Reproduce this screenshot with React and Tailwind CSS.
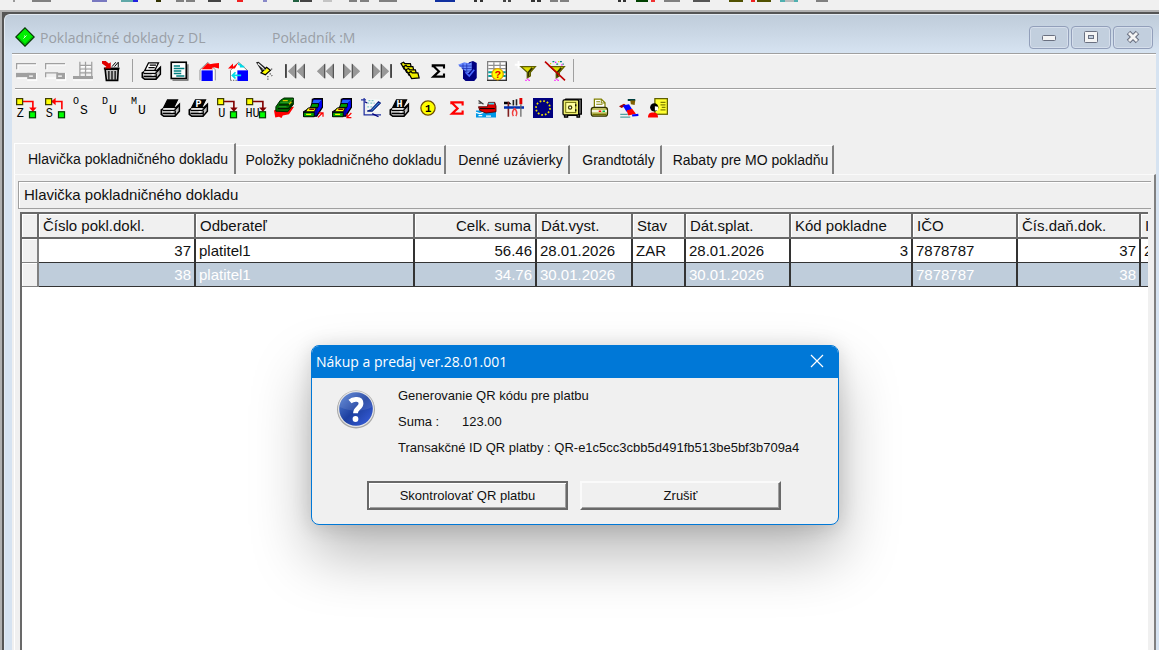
import React, { useState } from 'react';
import clsx from 'clsx';

// small 16x16 pixel icons, shown at 20px
function Pic({ children }) {
  return (
    <svg viewBox="0 0 16 16" className="w-5 h-5 block overflow-visible" fill="none" aria-hidden="true">
      {children}
    </svg>
  );
}

function Letter({ x, y, size = 9, fill = '#000', bold, children }) {
  return (
    <text x={x} y={y} fontSize={size} fill={fill} fontWeight={bold ? 700 : 400} fontFamily="'Liberation Mono', monospace">
      {children}
    </text>
  );
}

function Printer({ paper = '#fff', letter, lines }) {
  return (
    <Pic>
      <path d="M1 9.500L4 7.500h9l2.500-2.500v5.500L12 14.500H3L1 13z" fill="#c0c0c0" stroke="#000" strokeWidth="1.200" />
      <path d="M2 9.800h9.500L15 6.500" stroke="#000" />
      <path d="M2.500 8.700h9" stroke="#fff" />
      <path d="M2 12.300h10M12.200 10v4.500" stroke="#000" />
      <path d="M3 13.800h8" stroke="#555" />
      <path d="M8.500 11h2" stroke="#fff" />
      <path d="M6 1.500h8L11 7.500H3z" fill={paper} stroke="#000" />
      {lines && <path d="M7 3.300h5M6 5.300h5" stroke="#000" />}
      {letter && <Letter x={6} y={7} size={8} bold fill="#fff">{letter}</Letter>}
    </Pic>
  );
}

function Transfer({ label, line = '#f00', back }) {
  return (
    <Pic>
      <path d="M5 2.800h8.500V9" stroke={line} strokeWidth="1.300" />
      {back ? <path d="M5 2.800l3.500-3v6z" fill={line} /> : <path d="M13.500 11L10.500 7.500h6z" fill={line} />}
      <rect x=".5" y=".5" width="4.800" height="4.800" fill="#ff0" stroke="#404000" />
      <rect x="10.800" y="11" width="4.800" height="4.800" fill="#0f0" stroke="#004000" />
      <Letter x={label.length > 1 ? -0.5 : label === 'U' ? 1 : 0.5} y={15.3} size={9.5}>{label}</Letter>
    </Pic>
  );
}

function Pair({ a, b }) {
  return (
    <Pic>
      <Letter x={0} y={5} size={8}>{a}</Letter>
      <Letter x={5.5} y={13} size={10.5}>{b}</Letter>
    </Pic>
  );
}

function Cabinet({ out }) {
  return (
    <Pic>
      <path d="M7.500 1L9 .5h6.500v7L11 14.500H.5V11L7 7z" fill="#0000a8" stroke="#000" />
      <path d="M8.500 1.500H15l-2.500 2.500h-5z" fill="#2060ff" />
      <path d="M12.500 4L15 2v5l-3.500 5z" fill="#00f" />
      <path d="M7 4.500h5.500l-.5 3H6z" fill="#00a000" stroke="#000" strokeWidth=".7" />
      <path d="M4 8h6.500l-1.500 3H2z" fill="#ff0" stroke="#000" strokeWidth=".7" />
      <path d="M5 9h4" stroke="#800000" />
      <path d="M.5 11.500h8.500v3.500H.5z" fill="#00a000" stroke="#000" strokeWidth=".7" />
      <path d="M2.500 13h4" stroke="#ff0" />
      <path d={out ? 'M12 15.500l3.500-3.500M12.500 11.800H16V15' : 'M15.500 12L12 15.500M12 12.500v3.200h3.500'} stroke="#f00" />
    </Pic>
  );
}

function Disabled({ filled }) {
  return (
    <Pic>
      <path d="M1.500 7V3h15" stroke="#fff" />
      <path d="M.5 6.500V2h15.500" stroke="#a0a0a0" />
      {filled ? <rect x="0" y="9.500" width="11" height="3.500" fill="#a0a0a0" /> : <path d="M.5 13V9.500h10" stroke="#a0a0a0" />}
      <path d="M1 13.700h8" stroke="#fff" />
      <rect x="9" y="9.500" width="7" height="5" fill="#a0a0a0" />
      <path d="M10.500 12h3" stroke="#fff" />
      <path d="M9 15.200h7.500V9.500" stroke="#fff" />
    </Pic>
  );
}

function Funnel({ crossed }) {
  return (
    <Pic>
      {crossed ? (
        <>
          <path d="M6 .5h1.500M9 2.500h1.500M12 .5h1.500M14 2.500h1" stroke="#008080" />
          <path d="M8 1h1M13 3h1" stroke="#f0f" />
          <path d="M10.500 .5h1M4 2h1" stroke="#dd0" />
        </>
      ) : (
        <path d="M2 0v6M-1 3h6" stroke="#fff" strokeWidth="1.500" />
      )}
      <path d="M4 4.500h11.500l-4 4.500v3l-2.500 1.500V9z" fill="#dd0" stroke="#606000" />
      <path d="M13 5.500L10 9v3.500" stroke="#303000" strokeWidth="1.500" />
      <path d="M7.500 15.500h1M10 15.500h1M9 14.500h1" stroke="#f0f" />
      {crossed && <path d="M0 .5l16 15" stroke="#c00000" strokeWidth="1.300" />}
    </Pic>
  );
}

function House({ blue }) {
  return (
    <Pic>
      {blue ? (
        <>
          <path d="M2 15.500V7.500L8.500 1 15.500 7.500" fill="#fff" stroke="#808080" strokeWidth=".8" />
          <path d="M2 15.500h5" stroke="#808080" strokeDasharray="1 1" />
          <rect x="7.500" y="7.500" width="8.500" height="8.500" fill="#00f" />
          <path d="M0 6l4-4v2.500L8 1.500 5.500 6z" fill="#f00" />
          <path d="M8 2.500c2 0 3 1 3.500 2.500M9.500 4.500h3.500M10.500 11.500H4M6 9l-2.500 2.500L6 14" stroke="#00dce8" strokeWidth="1.400" />
        </>
      ) : (
        <>
          <path d="M.8 15.500V7L7 1l6 6v8.500" fill="#fff" stroke="#909090" strokeWidth=".8" />
          <rect x="2" y="7.500" width="9" height="8.500" fill="#00f" />
          <path d="M2 6.500L7 1.500l1.500 1L12 2l4-.5v4.500l-4-1-2 .5 1.500 1z" fill="#f00" />
        </>
      )}
    </Pic>
  );
}

function Nav({ bar, flip }) {
  return (
    <Pic>
      <g transform={flip ? 'matrix(-1 0 0 1 16 0)' : undefined}>
        {bar && <rect x="0" y="2.500" width="1.500" height="11" fill="#444" />}
        <path d="M8.500 3v10.500L3 8.200zM15.500 3v10.500L10 8.200z" fill="#989898" stroke="#989898" />
        <path d="M8.500 2.500v11M15.500 2.500v11" stroke="#555" />
      </g>
    </Pic>
  );
}

const recordTools = [
  { title: 'Nový', icon: <Disabled filled /> },
  { title: 'Oprava', icon: <Disabled /> },
  {
    title: 'Tabuľka',
    icon: (
      <Pic>
        <path d="M5.500 12V.5M15 .5v13M5.500 3.500h9.500M5.500 6.500h9.500M5.500 9.500h9.500M10 .5v12" stroke="#a0a0a0" />
        <path d="M0 12h16v2.500H0z" fill="#a0a0a0" />
        <path d="M0 15h16" stroke="#fff" />
        <path d="M6.500 4.500h3M11 4.500h3M6.500 7.500h3M11 7.500h3" stroke="#fff" />
      </Pic>
    ),
  },
  {
    title: 'Zrušiť',
    icon: (
      <Pic>
        <path d="M2.500 6.500h10.500l-.5 9h-9z" fill="#c0c0c0" stroke="#000" strokeWidth="1.300" />
        <path d="M5.500 8v7M8 8v7M10.500 8v7" stroke="#000" />
        <path d="M1.500 6h12.500" stroke="#000" strokeWidth="1.500" />
        <path d="M8 4.500L11 1M10 4.500l3-3.500v4" stroke="#000" strokeWidth=".8" />
        <path d="M0 0h3l2.500 2L7 1v5H2l1.500-1.500L0 2z" fill="#e00000" />
      </Pic>
    ),
  },
];

const mainTools = [
  { title: 'Tlač', icon: <Printer lines /> },
  {
    title: 'Zoznam',
    icon: (
      <Pic>
        <rect x="1" y="1" width="12" height="13" fill="#fff" stroke="#000" strokeWidth="1.300" />
        <path d="M3 4h5M3 6h8.500M3 8h6M3 10h6M5 12h6.500" stroke="#008080" strokeWidth="1.100" />
        <path d="M14.300 2.500v12.800H2" stroke="#606060" />
      </Pic>
    ),
  },
  { title: 'Domov', icon: <House /> },
  { title: 'Prenos', icon: <House blue /> },
  {
    title: 'Hľadať',
    icon: (
      <Pic>
        <path d="M0 1l2-.5 6 5-3 3.500z" fill="#222" />
        <path d="M1.500 2l5 4.500" stroke="#fff" />
        <path d="M4 9.500l4.500-4.500 3 2.500L7.500 11z" fill="#ff0" stroke="#000" />
        <path d="M5 6.500l3 .5" stroke="#888" />
        <path d="M11 10l2 2M9.500 12v3M12 6.500h2" stroke="#555" strokeDasharray="1 1" />
      </Pic>
    ),
  },
  { title: 'Prvý', icon: <Nav bar /> },
  { title: 'Predchádzajúci', icon: <Nav /> },
  { title: 'Ďalší', icon: <Nav flip /> },
  { title: 'Posledný', icon: <Nav bar flip /> },
  {
    title: 'Zložky',
    icon: (
      <Pic>
        <path d="M0 2l2-1 1 1h4.500l1 4-6 .5z" fill="#ee0" stroke="#000" />
        <path d="M2 4.500l2-1 1 1h4.500l1 4-6 .5z" fill="#ee0" stroke="#000" />
        <path d="M4 7l2-1 1 1h4.500l1 4-6 .5z" fill="#ee0" stroke="#000" />
        <path d="M6 9.500l2-1 1 1h4.500l1 4-6 .5z" fill="#ee0" stroke="#000" />
      </Pic>
    ),
  },
  {
    title: 'Súčet',
    icon: <Pic><path d="M3 5V3.500h9v2.500M3.500 4l4.500 4.300-4.500 4.200h8.500V10" stroke="#000" strokeWidth="1.700" /></Pic>,
  },
  {
    title: 'Kôš',
    icon: (
      <Pic>
        <path d="M9 1l3-1 3 1.500v12L13 16H6l-2-2V6z" fill="#000080" />
        <path d="M0 3l5-2 4 1 2-1v6l-3 3z" fill="#6a8cff" />
        <path d="M1 4h10M3 6h8M5 8h6M4 2v5M7 2v7" stroke="#1e30b0" strokeWidth=".6" />
        <path d="M6 9l3 3 4-5" stroke="#4868ff" strokeWidth="1.300" />
      </Pic>
    ),
  },
  {
    title: 'Dotaz',
    icon: (
      <Pic>
        <rect x=".5" y=".5" width="15" height="15" fill="#fff" stroke="#808080" />
        <path d="M1 3.500h14M1 6h14M5.500 1v14M10.500 1v14" stroke="#909090" />
        <path d="M1 9h4M1 12h4M12 9h3M12 12h3" stroke="#00a0a0" strokeWidth="1.500" />
        <path d="M15.500 1v14.500H0" stroke="#333" />
        <circle cx="8.500" cy="10.500" r="4.500" fill="#ff0" stroke="#e0a000" />
        <Letter x={6.100} y={13.500} size={8.500} fill="#e00000" bold>?</Letter>
      </Pic>
    ),
  },
  { title: 'Filter', icon: <Funnel /> },
  { title: 'Zrušiť filter', icon: <Funnel crossed /> },
];

const docTools = [
  { title: 'Prevod Z', icon: <Transfer label="Z" /> },
  { title: 'Prevod S', icon: <Transfer label="S" back /> },
  { title: 'OS', icon: <Pair a="O" b="S" /> },
  { title: 'DU', icon: <Pair a="D" b="U" /> },
  { title: 'MU', icon: <Pair a="M" b="U" /> },
  { title: 'Tlačiareň', icon: <Printer paper="#000" /> },
  { title: 'Tlač P', icon: <Printer paper="#000" letter="P" /> },
  { title: 'Uzávierka', icon: <Transfer label="U" line="#800000" /> },
  { title: 'Hlavná uzávierka', icon: <Transfer label="HU" line="#800000" /> },
  {
    title: 'Peniaze',
    icon: (
      <Pic>
        <path d="M0 10l4-2 12-1-4 6-5 1-1 2-2-1-3 .5z" fill="#f00" />
        <path d="M5 2l3-2h7.500v5L11 11l-9.500-.5V7z" fill="#007000" stroke="#002800" strokeWidth=".8" />
        <path d="M4 5.500h8l3-3.500M3 8.500h8.500L15 4.500" stroke="#001800" />
        <path d="M5 3.500h7L15 1M4 7h6" stroke="#30a030" strokeWidth=".7" />
        <path d="M7 2h4M12 5l2-2" stroke="#dcc800" />
      </Pic>
    ),
  },
  { title: 'Výdaj', icon: <Cabinet out /> },
  { title: 'Príjem', icon: <Cabinet /> },
  {
    title: 'Graf',
    icon: (
      <Pic>
        <path d="M0 1.500h4M2.500 0v13.500H16" stroke="#2030a0" />
        <path d="M5 1h10v10H5z" fill="#f4f8f8" />
        <path d="M5 4h6M5 7h4M6 2h5" stroke="#80c8c8" strokeDasharray="1.500 1" />
        <path d="M5 10.500l3-1 6-6.500 1.500 1-6.500 6.500z" fill="#30a0e0" stroke="#102080" strokeWidth=".9" />
        <path d="M3 3l2 1M9 12.500l5 2.500" stroke="#000080" />
      </Pic>
    ),
  },
  { title: 'Tlač H', icon: <Printer paper="#000" letter="H" /> },
  {
    title: 'Jedna',
    icon: (
      <Pic>
        <circle cx="8" cy="8" r="5.700" fill="#ff0" stroke="#705000" />
        <Letter x={5.600} y={10.800} size={8.500} bold>1</Letter>
      </Pic>
    ),
  },
  {
    title: 'Súčty',
    icon: <Pic><path d="M3.500 5V3.500h9v2.500M4 4l4.500 4.300-4.500 4.200h8.500V10" stroke="#f00" strokeWidth="1.700" /></Pic>,
  },
  {
    title: 'Doprava',
    icon: (
      <Pic>
        <path d="M0 10h16v5.500H0z" fill="#0098e8" />
        <path d="M0 11.500l3 1 3-1M2 14h3M8 14.500h4" stroke="#fff" />
        <path d="M2 7h7l1-3.500h5l1 3v4.500l-8 1-5-2z" fill="#e00000" stroke="#500000" strokeWidth=".7" />
        <path d="M10 4.500h4.500" stroke="#40d8e8" strokeWidth="1.500" />
        <path d="M2 2l4 3M2 4h3" stroke="#404040" />
        <path d="M3 8.500h12" stroke="#000" strokeWidth=".8" />
      </Pic>
    ),
  },
  {
    title: 'Nástroje',
    icon: (
      <Pic>
        <path d="M0 3h4l2 2H0z" fill="#000" />
        <path d="M3.500 3v12" stroke="#802020" strokeWidth="1.300" />
        <path d="M7.500 1.500V6M10 1v5" stroke="#222" strokeWidth="1.300" />
        <path d="M0 7.500h16" stroke="#0030b0" strokeWidth="2" />
        <path d="M13.500 0v5" stroke="#e00000" strokeWidth="2.300" />
        <path d="M13.500 5v10" stroke="#666" />
        <path d="M7.500 14.500C6 12 7 10 8.500 8.500 10 10 11 12 9.500 14.500" stroke="#f04040" strokeWidth="1.200" />
      </Pic>
    ),
  },
  {
    title: 'EÚ',
    icon: (
      <Pic>
        <rect width="16" height="16" fill="#000080" />
        <circle cx="8" cy="8" r="5.600" stroke="#e8e000" strokeWidth="1.400" strokeDasharray="1.400 1.532" />
      </Pic>
    ),
  },
  {
    title: 'Trezor',
    icon: (
      <Pic>
        <path d="M3 .8h12.500v12H14v2.500h-2v-1.500H4.500v1.500H2V3z" fill="#707070" stroke="#000" />
        <rect x=".8" y="1.500" width="12.500" height="12" rx="1" fill="#f0f070" stroke="#000" />
        <rect x="3" y="3.500" width="8" height="8" fill="#ffffa0" stroke="#606000" strokeWidth=".7" />
        <circle cx="6.500" cy="7.500" r="1.300" fill="#fff" stroke="#404000" />
        <path d="M11 5v1.500M11 9v1.500" stroke="#000" />
      </Pic>
    ),
  },
  {
    title: 'Fiškálna tlačiareň',
    icon: (
      <Pic>
        <path d="M3.500 7.500V.8H9l3 3v3.700" fill="#fff" stroke="#808000" />
        <path d="M5 3h3M5 5h5M9 1v3h3" stroke="#808000" strokeWidth=".8" />
        <rect x="1" y="7.500" width="13" height="7" rx="2" fill="#c0c060" stroke="#303000" />
        <path d="M1.500 10.500h12" stroke="#f4f4e0" strokeWidth="1.800" />
        <path d="M7 10.500h2" stroke="#f00" strokeWidth="1.200" />
        <path d="M10 10.500h2" stroke="#00c040" strokeWidth="1.200" />
        <path d="M2 13h11" stroke="#707000" />
      </Pic>
    ),
  },
  {
    title: 'Rýchlo',
    icon: (
      <Pic>
        <path d="M7 1.500h6" stroke="#004040" strokeWidth="1.600" />
        <path d="M9 2h4l-.5 3.500L9.500 5z" fill="#806000" />
        <path d="M0 6.500l4-2 2 1.500-4 2z" fill="#a00000" />
        <path d="M3 6l5-1 2.500 4L6 11z" fill="#00f" />
        <path d="M6 10l4.500-1.500 3 4-6 1.500z" fill="#f00" />
        <path d="M10.500 14l5-.5" stroke="#00f" strokeWidth="1.800" />
        <path d="M1 13h6M1 15.300h8" stroke="#50a0a0" />
      </Pic>
    ),
  },
  {
    title: 'Zákazník',
    icon: (
      <Pic>
        <rect x="5.500" y=".5" width="10" height="12.500" fill="#ffff30" stroke="#606000" />
        <path d="M10 3.500h4M10 5.500h4M11 7.500h3M10 9.500h4" stroke="#808000" />
        <circle cx="5" cy="7.500" r="3.300" fill="#000" />
        <path d="M5.500 6.500L8 7v3H5.500z" fill="#fff" />
        <path d="M0 15.500c0-3 1.500-4 4-4s4 1 4 4z" fill="#f00" />
      </Pic>
    ),
  },
];

const columns = [
  { key: 'cislo', label: 'Číslo pokl.dokl.', width: 157, num: true },
  { key: 'odberatel', label: 'Odberateľ', width: 219 },
  { key: 'suma', label: 'Celk. suma', width: 122, num: true, headRight: true },
  { key: 'vyst', label: 'Dát.vyst.', width: 96 },
  { key: 'stav', label: 'Stav', width: 53 },
  { key: 'splat', label: 'Dát.splat.', width: 105 },
  { key: 'kod', label: 'Kód pokladne', width: 122, num: true },
  { key: 'ico', label: 'IČO', width: 105 },
  { key: 'danDok', label: 'Čís.daň.dok.', width: 123, num: true },
  { key: 'ine', label: 'I', width: 90 },
];

const rows = [
  { cislo: '37', odberatel: 'platitel1', suma: '56.46', vyst: '28.01.2026', stav: 'ZAR', splat: '28.01.2026', kod: '3', ico: '7878787', danDok: '37', ine: '2' },
  { cislo: '38', odberatel: 'platitel1', suma: '34.76', vyst: '30.01.2026', stav: '', splat: '30.01.2026', kod: '', ico: '7878787', danDok: '38', ine: '' },
];

const tabs = [
  { label: 'Hlavička pokladničného dokladu', width: 'w-[222px]' },
  { label: 'Položky pokladničného dokladu', width: 'w-[210px]' },
  { label: 'Denné uzávierky', width: 'w-[124px]' },
  { label: 'Grandtotály', width: 'w-[92px]' },
  { label: 'Rabaty pre MO pokladňu', width: 'w-[172px]' },
];

// lower edges of the main application toolbar: x, width, colour
const appTools = [
  [13, 2, '#999'], [32, 19, '#808080'], [92, 15, '#7878c0'], [121, 12, '#60a8a8'], [133, 5, '#2020e0'],
  [156, 5, '#303000'], [176, 8, '#808080'], [186, 9, '#808080'], [208, 13, '#444'], [237, 6, '#f02020'],
  [263, 4, '#8888c8'], [293, 6, '#206040'], [300, 12, '#444'], [323, 9, '#c4c4c4'], [349, 8, '#808080'],
  [360, 9, '#808080'], [379, 18, '#808080'], [435, 20, '#1030a0'], [474, 3, '#333'], [480, 3, '#333'],
  [503, 3, '#444'], [508, 3, '#444'], [531, 4, '#333'], [537, 4, '#333'], [550, 8, '#808080'],
  [560, 9, '#808080'], [618, 3, '#333'], [623, 3, '#333'], [636, 12, '#004000'], [651, 4, '#f03030'],
  [664, 16, '#808080'], [693, 17, '#555'], [729, 14, '#505000'], [751, 4, '#f02020'], [757, 14, '#505000'],
  [780, 5, '#50b0b0'], [785, 9, '#bbb'], [794, 4, '#50b0b0'], [816, 12, '#808080'],
];

function ToolGroup({ tools, className }) {
  return (
    <div className={clsx('flex items-center justify-between shrink-0', className)}>
      {tools.map((t) => (
        <button key={t.title} type="button" title={t.title} aria-label={t.title} className="shrink-0">
          {t.icon}
        </button>
      ))}
    </div>
  );
}

function CaptionButton({ label, children }) {
  return (
    <button
      type="button"
      aria-label={label}
      className="w-10 h-[23px] flex items-center justify-center rounded-sm border border-[#929fba] bg-[#c2cfde] shadow-[inset_0_0_0_1px_#d5deeb]"
    >
      <svg viewBox="0 0 16 14" className="w-4 h-3.5" fill="none" aria-hidden="true">{children}</svg>
    </button>
  );
}

function TitleBar() {
  return (
    <header className="h-[38px] shrink-0 flex items-center pt-[6px] pl-[10px] bg-linear-to-b from-[#bfccda] to-[#d6e3f1]">
      <svg viewBox="0 0 20 20" className="w-5 h-5 shrink-0" aria-hidden="true">
        <path d="M10 .8L19.200 10 10 19.200.8 10z" fill="#00f000" stroke="#063806" strokeWidth="1.200" />
        <path d="M2.500 10L10 17.500 17.500 10" fill="none" stroke="#009000" />
        <path d="M8.500 11.500l3-3M9 9h1" stroke="#d0ffd0" />
      </svg>
      <h1 className="ml-[5px] w-[232px] shrink-0 font-['Open_Sans',sans-serif] text-[14px] text-[#9a9fa6] whitespace-nowrap">
        Pokladničné doklady z DL
      </h1>
      <span className="grow font-['Open_Sans',sans-serif] text-[14px] text-[#9a9fa6]">Pokladník :M</span>
      <div className="flex gap-[2px] pr-[6px]">
        <CaptionButton label="Minimalizovať">
          <rect x="1.500" y="5.500" width="13" height="5" rx="1" fill="#f4f4f4" stroke="#6a7080" />
        </CaptionButton>
        <CaptionButton label="Maximalizovať">
          <rect x="1.500" y="1.500" width="13" height="11" rx="1" fill="#f4f4f4" stroke="#6a7080" />
          <rect x="5.500" y="5.500" width="5" height="3" fill="#c2cfde" stroke="#6a7080" />
        </CaptionButton>
        <CaptionButton label="Zavrieť">
          <path d="M3.500 2.500l9 9M12.500 2.500l-9 9" stroke="#6a7080" strokeWidth="5" />
          <path d="M4 3l8 8M12 3l-8 8" stroke="#f4f4f4" strokeWidth="2.800" />
        </CaptionButton>
      </div>
    </header>
  );
}

function DocumentGrid({ selected, onSelect }) {
  return (
    <div className="grow overflow-hidden bg-white border-l-2 border-t-2 border-[#696969] mr-[6px]">
      <table className="table-fixed w-[1209px] border-separate border-spacing-0 text-[15px] leading-5 text-[#111]">
        <colgroup>
          <col style={{ width: 17 }} />
          {columns.map((c) => <col key={c.key} style={{ width: c.width }} />)}
        </colgroup>
        <thead>
          <tr className="h-[25px]">
            <th className="border-r-2 border-b-2 border-[#696969] bg-[#f0f0f0] shadow-[inset_1px_1px_0_#fff]" aria-label="Riadok" />
            {columns.map((c) => (
              <th
                key={c.key}
                className={clsx(
                  'p-0 px-1 font-normal whitespace-nowrap overflow-hidden bg-[#f0f0f0] border-r-2 border-b-2 border-[#696969] shadow-[inset_1px_1px_0_#fff]',
                  c.headRight ? 'text-right' : 'text-left'
                )}
              >
                {c.label}
              </th>
            ))}
          </tr>
        </thead>
        <tbody>
          {rows.map((row, idx) => (
            <tr key={row.cislo} onClick={() => onSelect(idx)} className={clsx('h-6', idx === selected && 'bg-[#bfcddb] text-white')}>
              <td className="p-0 bg-[#f0f0f0] border-r-2 border-b border-[#808080] shadow-[inset_1px_1px_0_#fff]" />
              {columns.map((c) => (
                <td
                  key={c.key}
                  className={clsx(
                    'p-0 px-[3px] whitespace-nowrap overflow-hidden border-r-2 border-b border-[#333]',
                    c.num && 'text-right'
                  )}
                >
                  {row[c.key]}
                </td>
              ))}
            </tr>
          ))}
        </tbody>
      </table>
    </div>
  );
}

function QrDialog({ onClose }) {
  return (
    <div
      role="dialog"
      aria-labelledby="qr-title"
      className="absolute left-[311px] top-[345px] w-[528px] h-[180px] flex flex-col rounded-lg overflow-hidden bg-[#f0f0f0] border border-[#0078d7] shadow-[0_30px_60px_rgba(0,0,0,0.28),0_2px_20px_rgba(0,0,0,0.14)]"
    >
      <div className="h-8 shrink-0 flex items-center justify-between bg-[#0078d7] text-white pl-1 pr-[14px] pb-[2px]">
        <h2 id="qr-title" className="font-['Open_Sans',sans-serif] text-[14px]">Nákup a predaj ver.28.01.001</h2>
        <button type="button" aria-label="Zavrieť" onClick={onClose}>
          <svg viewBox="0 0 14 14" className="w-3.5 h-3.5" stroke="#fff" strokeWidth="1.200" aria-hidden="true">
            <path d="M1 1l12 12M13 1L1 13" />
          </svg>
        </button>
      </div>
      <div className="flex items-start pl-6 pt-[5px]">
        <svg viewBox="0 0 40 40" className="w-10 h-10 mt-[6px] shrink-0" aria-hidden="true">
          <defs>
            <linearGradient id="ball" x1="0" y1="0" x2="1" y2="1">
              <stop offset="0" stopColor="#5a86d8" />
              <stop offset=".5" stopColor="#1c3fa0" />
              <stop offset="1" stopColor="#3a60e0" />
            </linearGradient>
          </defs>
          <circle cx="20" cy="20.500" r="19" fill="#a8a8a8" />
          <circle cx="20" cy="20" r="18" fill="#e6e6e6" />
          <circle cx="20" cy="20" r="16.800" fill="url(#ball)" />
          <path d="M4 18a16 15 0 0 1 32 0c-9 5-22 5-32 0z" fill="#fff" opacity=".1" />
          <path d="M14 12.500c3.500-3 11-3 11 1.800 0 5-5.500 4.500-5.500 10" fill="none" stroke="#fff" strokeWidth="4.800" />
          <circle cx="19.500" cy="30" r="2.900" fill="#fff" />
        </svg>
        <div className="ml-[22px] text-[13px] leading-[26px] text-[#111] whitespace-nowrap">
          <p>Generovanie QR kódu pre platbu</p>
          <p className="flex"><span className="w-16">Suma :</span><span>123.00</span></p>
          <p>Transakčné ID QR platby : QR-e1c5cc3cbb5d491fb513be5bf3b709a4</p>
        </div>
      </div>
      <div className="flex gap-3 justify-center mt-5 text-[13px] text-[#111] pr-[2px]">
        <button
          type="button"
          className="w-[201px] h-[29px] border-2 border-[#696969] shadow-[inset_1px_1px_0_#fff,inset_-1px_-1px_0_#a0a0a0]"
        >
          Skontrolovať QR platbu
        </button>
        <button
          type="button"
          onClick={onClose}
          className="w-[201px] h-[29px] border-2 border-t-[#fafafa] border-l-[#fafafa] border-r-[#696969] border-b-[#696969] shadow-[inset_-1px_-1px_0_#a0a0a0]"
        >
          Zrušiť
        </button>
      </div>
    </div>
  );
}

export default function App() {
  const [tab, setTab] = useState(0);
  const [selected, setSelected] = useState(1);
  const [open, setOpen] = useState(true);

  return (
    <div className="relative h-screen flex flex-col overflow-hidden bg-[#f0f0f0] font-['Liberation_Sans',Arial,sans-serif] text-[#111]">
      <div className="h-[10px] shrink-0 overflow-hidden">
        <svg width="840" height="2" className="block" aria-hidden="true">
          {appTools.map(([x, w, fill]) => <rect key={x} x={x} y="0" width={w} height="2" fill={fill} />)}
        </svg>
      </div>

      <div className="grow min-h-0 flex flex-col border-t-2 border-l-2 border-[#b0b0b0]">
        <div className="grow min-h-0 flex flex-col border-t-2 border-l-2 border-[#555] bg-[#555]">
          <main className="grow min-h-0 flex flex-col rounded-tl-md overflow-hidden border-t border-l border-[#e4ebf3] bg-[#d6e3f1]">
            <TitleBar />

            <section className="grow min-h-0 flex flex-col ml-[7px] mr-[3px] bg-[#f0f0f0] border-t border-[#a0a0a0] shadow-[inset_0_1px_0_#fff]">
              <div className="h-[35px] shrink-0 ml-[3px] flex items-center border-b border-[#a0a0a0] pl-px pb-px">
                <ToolGroup tools={recordTools} className="w-[106px]" />
                <div className="w-px h-[23px] ml-[10px] mr-2 bg-[#a0a0a0]" />
                <ToolGroup tools={mainTools} className="w-[424px]" />
                <div className="w-px h-[23px] ml-2 bg-[#a0a0a0]" />
              </div>
              <div className="h-[38px] shrink-0 ml-[3px] flex items-center border-t border-white pl-px pb-[2px]">
                <ToolGroup tools={docTools} className="w-[652px]" />
              </div>

              <div role="tablist" className="h-[31px] shrink-0 mt-4 ml-[2px] flex items-end text-[14px]">
                {tabs.map((t, i) => (
                  <button
                    key={t.label}
                    type="button"
                    role="tab"
                    aria-selected={tab === i}
                    onClick={() => setTab(i)}
                    className={clsx(
                      'shrink-0 pl-[7px] whitespace-nowrap border-t border-t-white border-r-2 border-r-[#808080]',
                      t.width,
                      tab === i ? 'h-[31px] border-l border-l-white' : 'h-[29px]'
                    )}
                  >
                    {t.label}
                  </button>
                ))}
              </div>

              <div role="tabpanel" className="grow min-h-0 flex flex-col ml-[2px] border-l border-l-white border-t border-t-[#fafafa] border-r-2 border-r-[#808080] pt-[6px] pl-[3px]">
                <div className="h-[28px] shrink-0 mr-[3px] flex items-center pl-[5px] border-y border-l border-[#a0a0a0] shadow-[inset_1px_1px_0_#fff]">
                  <h2 className="text-[15px]">{tabs[tab].label}</h2>
                </div>
                <div className="grow min-h-0 flex flex-col pt-[3px] pl-[2px]">
                  <DocumentGrid selected={selected} onSelect={setSelected} />
                </div>
              </div>
            </section>
          </main>
        </div>
      </div>

      {open && <QrDialog onClose={() => setOpen(false)} />}
    </div>
  );
}
